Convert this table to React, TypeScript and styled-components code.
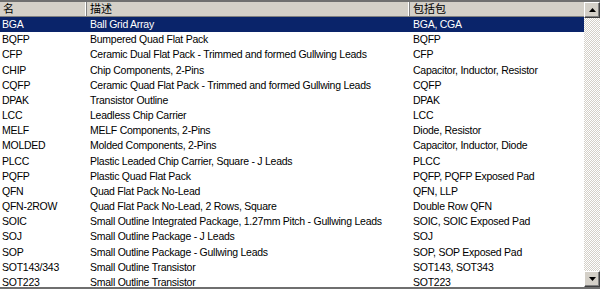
import React from 'react';
import styled, { createGlobalStyle } from 'styled-components';

interface Pkg {
  name: string;
  desc: string;
  includes: string;
}

const packages: Pkg[] = [
  { name: 'BGA', desc: 'Ball Grid Array', includes: 'BGA, CGA' },
  { name: 'BQFP', desc: 'Bumpered Quad Flat Pack', includes: 'BQFP' },
  { name: 'CFP', desc: 'Ceramic Dual Flat Pack - Trimmed and formed Gullwing Leads', includes: 'CFP' },
  { name: 'CHIP', desc: 'Chip Components, 2-Pins', includes: 'Capacitor, Inductor, Resistor' },
  { name: 'CQFP', desc: 'Ceramic Quad Flat Pack - Trimmed and formed Gullwing Leads', includes: 'CQFP' },
  { name: 'DPAK', desc: 'Transistor Outline', includes: 'DPAK' },
  { name: 'LCC', desc: 'Leadless Chip Carrier', includes: 'LCC' },
  { name: 'MELF', desc: 'MELF Components, 2-Pins', includes: 'Diode, Resistor' },
  { name: 'MOLDED', desc: 'Molded Components, 2-Pins', includes: 'Capacitor, Inductor, Diode' },
  { name: 'PLCC', desc: 'Plastic Leaded Chip Carrier, Square - J Leads', includes: 'PLCC' },
  { name: 'PQFP', desc: 'Plastic Quad Flat Pack', includes: 'PQFP, PQFP Exposed Pad' },
  { name: 'QFN', desc: 'Quad Flat Pack No-Lead', includes: 'QFN, LLP' },
  { name: 'QFN-2ROW', desc: 'Quad Flat Pack No-Lead, 2 Rows, Square', includes: 'Double Row QFN' },
  { name: 'SOIC', desc: 'Small Outline Integrated Package, 1.27mm Pitch - Gullwing Leads', includes: 'SOIC, SOIC Exposed Pad' },
  { name: 'SOJ', desc: 'Small Outline Package - J Leads', includes: 'SOJ' },
  { name: 'SOP', desc: 'Small Outline Package - Gullwing Leads', includes: 'SOP, SOP Exposed Pad' },
  { name: 'SOT143/343', desc: 'Small Outline Transistor', includes: 'SOT143, SOT343' },
  { name: 'SOT223', desc: 'Small Outline Transistor', includes: 'SOT223' },
];

const GlobalStyle = createGlobalStyle`
  body {
    margin: 0;
    background: #ffffff;
    font-family: "Liberation Sans", "Noto Sans CJK SC", sans-serif;
  }
`;

const ListView = styled.div`
  width: 600px;
  height: 289px;
  box-sizing: border-box;
  border-top: 2px solid #6f6f6f;
  border-bottom: 2px solid #6f6f6f;
  display: flex;
  background: #ffffff;
  overflow: hidden;
`;

const Body = styled.div`
  flex: 1;
  display: flex;
  flex-direction: column;
  overflow: hidden;
`;

const cols = '87px 323px 1fr';

const Header = styled.div`
  display: grid;
  grid-template-columns: ${cols};
  height: 14px;
  flex-shrink: 0;
  background: #d4d0c8;
  border-bottom: 1px solid #808080;
`;

const HeaderCell = styled.div`
  font-size: 11px;
  line-height: 14px;
  padding-left: 3px;
  color: #000000;
  border-right: 1px solid #808080;
  box-shadow: inset -1px 0 0 #ffffff;
  white-space: nowrap;
  overflow: hidden;
  &:last-child {
    border-right: none;
    box-shadow: none;
  }
`;

const Row = styled.div<{ $selected?: boolean }>`
  display: grid;
  grid-template-columns: ${cols};
  height: 15.18px;
  flex-shrink: 0;
  background: ${p => (p.$selected ? '#0a246a' : '#ffffff')};
  color: ${p => (p.$selected ? '#ffffff' : '#000000')};
`;

const Cell = styled.div`
  font-size: 10.5px;
  letter-spacing: -0.25px;
  line-height: 15px;
  padding-left: 2px;
  white-space: nowrap;
  overflow: hidden;
  &:nth-child(2),
  &:nth-child(3) {
    padding-left: 3px;
  }
`;

const ScrollBar = styled.div`
  width: 16px;
  display: flex;
  flex-direction: column;
  flex-shrink: 0;
  background-color: #f4f3ef;
  background-image: repeating-conic-gradient(#d4d0c8 0 25%, #ffffff 0 50%);
  background-size: 2px 2px;
`;

const ArrowButton = styled.div`
  width: 16px;
  height: 16px;
  box-sizing: border-box;
  background: #d4d0c8;
  border-top: 1px solid #ffffff;
  border-left: 1px solid #ffffff;
  border-right: 1px solid #404040;
  border-bottom: 1px solid #404040;
  box-shadow: inset -1px -1px 0 #808080;
  display: flex;
  align-items: center;
  justify-content: center;
`;

const Track = styled.div`
  flex: 1;
`;

const Arrow = ({ down }: { down?: boolean }) => (
  <svg width="7" height="4" viewBox="0 0 7 4">
    <path d={down ? 'M0 0H7L3.5 4Z' : 'M3.5 0L7 4H0Z'} fill="#000000" />
  </svg>
);

const App: React.FC = () => (
  <>
    <GlobalStyle />
    <ListView>
      <Body>
        <Header>
          <HeaderCell>名</HeaderCell>
          <HeaderCell>描述</HeaderCell>
          <HeaderCell>包括包</HeaderCell>
        </Header>
        {packages.map((p, i) => (
          <Row key={p.name} $selected={i === 0}>
            <Cell>{p.name}</Cell>
            <Cell>{p.desc}</Cell>
            <Cell>{p.includes}</Cell>
          </Row>
        ))}
      </Body>
      <ScrollBar>
        <ArrowButton>
          <Arrow />
        </ArrowButton>
        <Track />
        <ArrowButton>
          <Arrow down />
        </ArrowButton>
      </ScrollBar>
    </ListView>
  </>
);

export default App;
